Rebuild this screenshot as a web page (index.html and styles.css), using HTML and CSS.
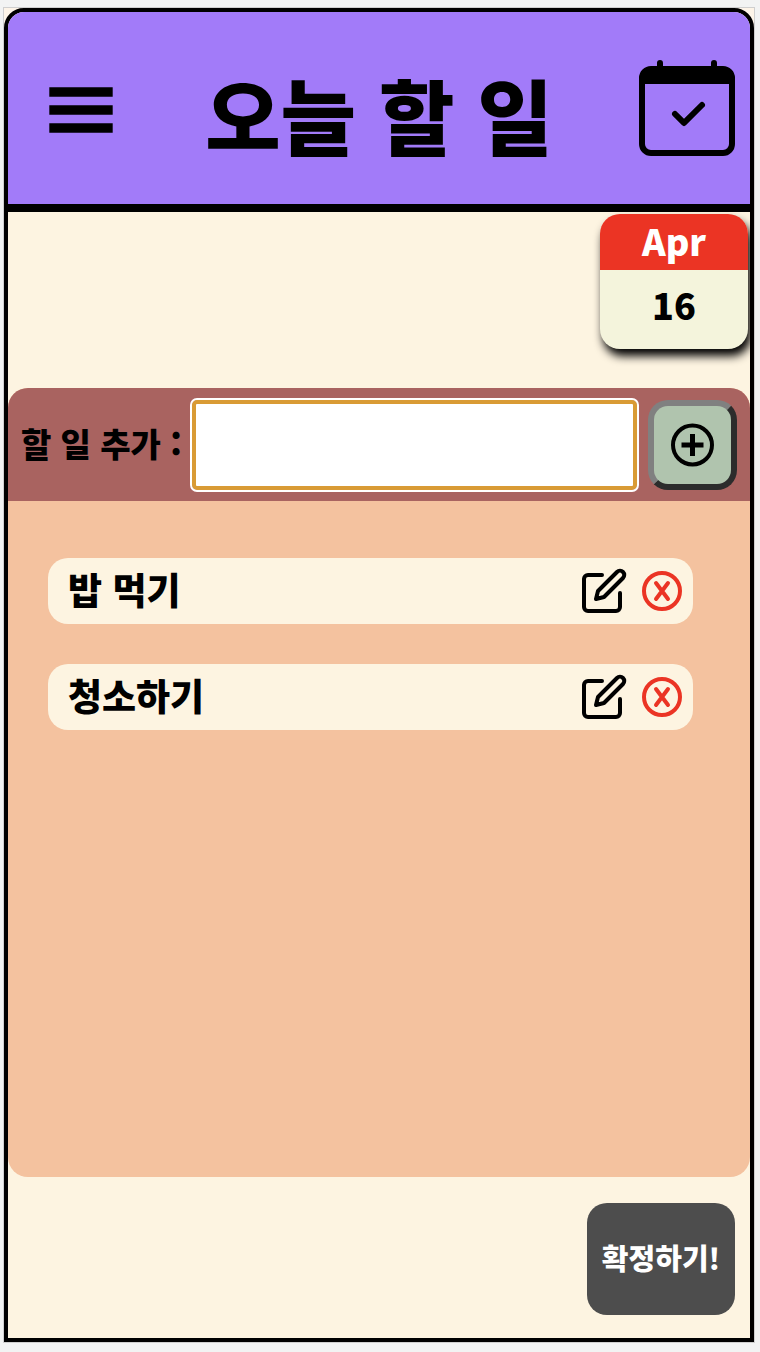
FILE: index.html
```html
<!DOCTYPE html>
<html lang="ko">
<head>
<meta charset="utf-8">
<meta name="viewport" content="width=device-width, initial-scale=1">
<title>오늘 할 일</title>
<link rel="stylesheet" href="styles.css">
</head>
<body>
<div class="page">
  <div class="app">
    <header class="header">
      <button class="icon-button menu" type="button" aria-label="메뉴">
        <svg width="64" height="46" viewBox="0 0 64 46"><path d="M.3.3h63.4v9.4H.3zM.3 18.3h63.4v9.4H.3zM.3 36.3h63.4v9.4H.3z"/></svg>
      </button>
      <h1 class="title">오늘 할 일</h1>
      <button class="icon-button calendar" type="button" aria-label="달력">
        <svg width="96" height="96" viewBox="0 0 16 16"><path d="M10.854 7.146a.5.5 0 0 1 0 .708l-3 3a.5.5 0 0 1-.708 0l-1.5-1.5a.5.5 0 1 1 .708-.708L7.5 9.793l2.646-2.647a.5.5 0 0 1 .708 0z"/><path d="M3.5 0a.5.5 0 0 1 .5.5V1h8V.5a.5.5 0 0 1 1 0V1h1a2 2 0 0 1 2 2v11a2 2 0 0 1-2 2H2a2 2 0 0 1-2-2V3a2 2 0 0 1 2-2h1V.5a.5.5 0 0 1 .5-.5zM1 4v10a1 1 0 0 0 1 1h12a1 1 0 0 0 1-1V4H1z"/></svg>
      </button>
    </header>

    <div class="date-row">
      <div class="date-card">
        <div class="month">Apr</div>
        <div class="day">16</div>
      </div>
    </div>

    <main class="todo">
      <form class="add-form">
        <label class="add-label" for="new-todo">할 일 추가 :</label>
        <input class="add-input" id="new-todo" type="text">
        <button class="add-button" type="button" aria-label="추가">
          <svg width="43" height="44" viewBox="0 0 43 44" fill="none" stroke="#000" stroke-width="4"><circle cx="21.5" cy="22" r="19.5"/><path d="M21.5 11v22M10.500 22h22" stroke-width="5"/></svg>
        </button>
      </form>
      <ul class="list">
        <li class="item">
          <span class="item-text">밥 먹기</span>
          <button class="icon-button" type="button" aria-label="수정">
            <svg width="48" height="48" viewBox="0 0 24 24" fill="none" stroke="#000" stroke-width="2" stroke-linecap="round" stroke-linejoin="round"><path d="M11 4H4a2 2 0 0 0-2 2v14a2 2 0 0 0 2 2h14a2 2 0 0 0 2-2v-7"/><path d="M18.5 2.500a2.121 2.121 0 0 1 3 3L12 15l-4 1 1-4 9.500-9.500z"/></svg>
          </button>
          <button class="icon-button" type="button" aria-label="삭제">
            <svg width="40" height="40" viewBox="0 0 40 40" fill="none" stroke="#eb3424" stroke-width="4" stroke-linecap="round"><circle cx="20" cy="20" r="18"/><path d="M14 12l12 16M26 12L14 28"/></svg>
          </button>
        </li>
        <li class="item">
          <span class="item-text">청소하기</span>
          <button class="icon-button" type="button" aria-label="수정">
            <svg width="48" height="48" viewBox="0 0 24 24" fill="none" stroke="#000" stroke-width="2" stroke-linecap="round" stroke-linejoin="round"><path d="M11 4H4a2 2 0 0 0-2 2v14a2 2 0 0 0 2 2h14a2 2 0 0 0 2-2v-7"/><path d="M18.5 2.500a2.121 2.121 0 0 1 3 3L12 15l-4 1 1-4 9.500-9.500z"/></svg>
          </button>
          <button class="icon-button" type="button" aria-label="삭제">
            <svg width="40" height="40" viewBox="0 0 40 40" fill="none" stroke="#eb3424" stroke-width="4" stroke-linecap="round"><circle cx="20" cy="20" r="18"/><path d="M14 12l12 16M26 12L14 28"/></svg>
          </button>
        </li>
      </ul>
    </main>

    <footer class="footer">
      <button class="confirm" type="button">확정하기!</button>
    </footer>
  </div>
</div>
</body>
</html>
```

FILE: styles.css
```css
* {
  box-sizing: border-box;
}

body {
  margin: 0;
  min-height: 100vh;
  padding: 7px 5px 9px 3px;
  display: flex;
  background: #f2f3f3;
  color: #000;
  font-family: "Noto Sans CJK KR", sans-serif;
  font-weight: 900;
}

button,
input {
  font: inherit;
}

svg {
  display: block;
}

.page {
  flex: 1;
  min-width: 0;
  display: flex;
  border: 1px solid #cfcfcf;
  background: #fdf4e8;
}

.app {
  flex: 1;
  min-width: 0;
  display: flex;
  flex-direction: column;
  overflow: hidden;
  border: 4px solid #000;
  border-radius: 20px 20px 0 0;
  background: #fdf4e1;
}

.icon-button {
  flex: none;
  padding: 0;
  border: 0;
  background: none;
  cursor: pointer;
}

.header {
  display: grid;
  grid-template-columns: 1fr auto 1fr;
  align-items: center;
  height: 200px;
  padding: 0 15px;
  border-bottom: 8px solid #000;
  background: #a27bf9;
}

.menu {
  justify-self: start;
  margin-left: 26px;
  padding-top: 4px;
}

.calendar {
  justify-self: end;
}

.title {
  margin: 0;
  padding-top: 12px;
  font-size: 82px;
  font-weight: 900;
  line-height: 112px;
  white-space: nowrap;
}

.date-row {
  display: flex;
  justify-content: flex-end;
  align-items: flex-start;
  height: 176px;
  padding: 2px;
}

.date-card {
  width: 148px;
  border-radius: 20px;
  overflow: hidden;
  background: #f4f4dc;
  box-shadow: 3px 7px 10px #000;
  text-align: center;
}

.month {
  padding-bottom: 4px;
  background: #eb3424;
  color: #fff;
  font-size: 36px;
  line-height: 52px;
}

.day {
  padding-bottom: 11px;
  font-size: 36px;
  line-height: 68px;
}

.todo {
  flex: 1;
  display: flex;
  flex-direction: column;
  border-radius: 20px;
  overflow: hidden;
  background: #f4c29f;
}

.add-form {
  display: flex;
  align-items: center;
  height: 113px;
  padding: 0 13px;
  background: #a96360;
}

.add-label {
  flex: none;
  width: 171px;
  padding-bottom: 4px;
  font-size: 33px;
  white-space: nowrap;
}

.add-input {
  flex: 1;
  min-width: 0;
  height: 90px;
  margin-right: 11px;
  padding: 0 12px;
  border: 4px solid #d99b35;
  border-radius: 5px;
  outline: 2px solid #fff;
  background: #fff;
  font-size: 33px;
}

.add-button {
  flex: none;
  display: grid;
  place-items: center;
  width: 89px;
  height: 90px;
  padding: 0;
  border: 6px solid;
  border-color: #808080 #2c2c2c #2c2c2c #808080;
  border-radius: 20px;
  background: #b0c4ae;
}

.list {
  display: flex;
  flex-direction: column;
  gap: 40px;
  margin: 0;
  padding: 57px 57px 57px 40px;
  list-style: none;
}

.item {
  display: flex;
  align-items: center;
  gap: 14px;
  height: 66px;
  padding: 0 11px 0 20px;
  border-radius: 20px;
  background: #fdf4e1;
}

.item-text {
  flex: 1;
  padding-bottom: 4px;
  font-size: 37px;
  line-height: 48px;
}

.footer {
  display: flex;
  justify-content: flex-end;
  padding: 26px 15px 23px;
}

.confirm {
  width: 148px;
  height: 112px;
  padding: 0 0 4px;
  border: 0;
  border-radius: 20px;
  background: #4d4d4d;
  color: #fff;
  font-size: 29px;
  white-space: nowrap;
}
```
